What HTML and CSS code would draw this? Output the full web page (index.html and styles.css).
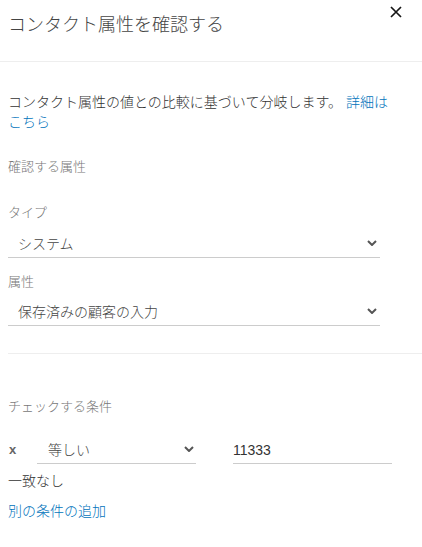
FILE: index.html
```html
<!DOCTYPE html>
<html lang="ja">
<head>
    <meta charset="UTF-8">
    <meta name="viewport" content="width=device-width, initial-scale=1.0">
    <title>コンタクト属性を確認する</title>
    <link rel="stylesheet" href="styles.css">
</head>
<body>
  <div class="panel">
    <div class="panel-header">
      <h1 class="panel-title">コンタクト属性を確認する</h1>
      <button class="close-btn" title="閉じる">
        <svg width="12" height="12" viewBox="0 0 12 12"><path d="M1 1 L11 11 M11 1 L1 11" stroke="#161616" stroke-width="1.7" fill="none"/></svg>
      </button>
    </div>

    <div class="panel-body">
      <p class="intro">コンタクト属性の値との比較に基づいて分岐します。 <a href="#">詳細はこちら</a></p>

      <div class="section-label">確認する属性</div>

      <div class="field">
        <label class="field-label">タイプ</label>
        <div class="select">
          <span>システム</span>
          <svg class="chevron" width="10" height="6" viewBox="0 0 10 6"><path d="M1 1 L5 5 L9 1" stroke="#555" stroke-width="2" fill="none"/></svg>
        </div>
      </div>

      <div class="field">
        <label class="field-label">属性</label>
        <div class="select">
          <span>保存済みの顧客の入力</span>
          <svg class="chevron" width="10" height="6" viewBox="0 0 10 6"><path d="M1 1 L5 5 L9 1" stroke="#555" stroke-width="2" fill="none"/></svg>
        </div>
      </div>
    </div>

    <div class="divider"></div>

    <div class="panel-body">
      <div class="section-label conditions-label">チェックする条件</div>

      <div class="condition-row">
        <span class="remove">x</span>
        <div class="select small">
          <span>等しい</span>
          <svg class="chevron" width="10" height="6" viewBox="0 0 10 6"><path d="M1 1 L5 5 L9 1" stroke="#555" stroke-width="2" fill="none"/></svg>
        </div>
        <div class="text-input">11333</div>
      </div>

      <div class="no-match">一致なし</div>
      <a href="#" class="add-link">別の条件の追加</a>
    </div>
  </div>
</body>
</html>
```

FILE: styles.css
```css
body {
    margin: 0;
    font-family: "Liberation Sans", "Noto Sans CJK JP", sans-serif;
    font-weight: 300;
    color: #333;
    background: #fff;
}
.panel {
    position: relative;
}
.panel-header {
    height: 61px;
    border-bottom: 1px solid #eee;
    padding: 0 8px;
    box-sizing: content-box;
}
.panel-title {
    margin: 0;
    padding-top: 11px;
    font-size: 18px;
    line-height: 28px;
    font-weight: 300;
    color: #444;
}
.close-btn {
    position: absolute;
    top: 6px;
    left: 390px;
    width: 12px;
    height: 12px;
    padding: 0;
    border: none;
    background: none;
    display: flex;
}
.panel-body {
    padding: 0 8px;
}
.intro {
    margin: 30px 0 0;
    font-size: 14px;
    line-height: 20px;
    width: 390px;
    color: #333;
}
a {
    color: #0073bb;
    text-decoration: none;
}
.section-label {
    margin-top: 26px;
    font-size: 13px;
    line-height: 18px;
    color: #777;
}
.field {
    width: 372px;
}
.field-label {
    display: block;
    font-size: 13px;
    line-height: 18px;
    color: #777;
    margin-top: 28px;
}
.field + .field .field-label {
    margin-top: 15px;
}
.select {
    display: flex;
    align-items: center;
    justify-content: space-between;
    height: 29px;
    margin-top: 6px;
    padding: 0 3px 0 10px;
    border-bottom: 1px solid #ccc;
    font-size: 14px;
    color: #444;
}
.field + .field .select {
    margin-top: 5px;
}
.divider {
    margin: 27px 0 0 8px;
    border-top: 1px solid #eee;
}
.conditions-label {
    margin-top: 44px;
}
.condition-row {
    display: flex;
    align-items: center;
    margin-top: 18px;
}
.remove {
    width: 28px;
    padding-left: 1px;
    font-size: 13px;
    font-weight: bold;
    color: #666;
}
.select.small {
    width: 146px;
    margin-top: 0;
    padding-left: 11px;
    padding-right: 2px;
}
.text-input {
    width: 159px;
    height: 29px;
    margin-left: 37px;
    border-bottom: 1px solid #ccc;
    display: flex;
    align-items: center;
    font-size: 14px;
    color: #333;
    padding-top: 2px;
    box-sizing: border-box;
}
.no-match {
    margin-top: 7px;
    font-size: 14px;
    line-height: 20px;
    color: #333;
}
.add-link {
    display: block;
    margin-top: 10px;
    font-size: 14px;
    line-height: 20px;
}
```
